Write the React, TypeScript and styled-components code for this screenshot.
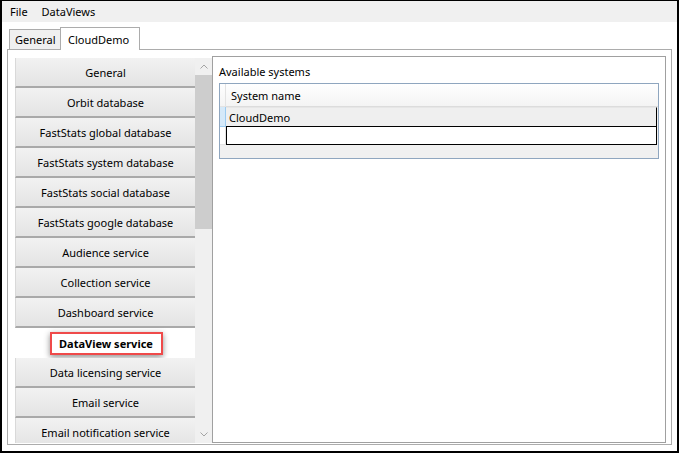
import React from 'react'
import styled, { createGlobalStyle } from 'styled-components'

const GlobalStyle = createGlobalStyle`
  html, body {
    margin: 0;
    padding: 0;
    background: #ffffff;
  }
  * {
    box-sizing: border-box;
  }
`

const Window = styled.div`
  width: 679px;
  height: 453px;
  border-top: 1px solid #000;
  border-left: 2px solid #000;
  border-right: 2px solid #000;
  border-bottom: 2px solid #000;
  background: #ffffff;
  display: flex;
  flex-direction: column;
  font-family: "Segoe UI", "Noto Sans", "Open Sans", sans-serif;
  font-size: 11px;
  color: #000;
  overflow: hidden;
`

const MenuBar = styled.div`
  height: 21px;
  background: #f0f0f0;
  display: flex;
  align-items: center;
  padding-left: 8px;
  gap: 14px;
  flex-shrink: 0;
`

const MenuItem = styled.span`
  line-height: 21px;
`

const TabStrip = styled.div`
  height: 27px;
  display: flex;
  align-items: flex-end;
  padding-left: 7px;
  flex-shrink: 0;
`

const Tab = styled.div<{ active?: boolean; w: number }>`
  width: ${p => p.w}px;
  height: ${p => (p.active ? 23 : 20)}px;
  padding-left: ${p => (p.active ? 7 : 5)}px;
  display: flex;
  align-items: center;
  border: 1px solid #acacac;
  border-bottom: none;
  background: ${p => (p.active ? '#ffffff' : '#f0f0f0')};
  margin-left: ${p => (p.active ? -1 : 0)}px;
  margin-bottom: ${p => (p.active ? -1 : 0)}px;
  position: relative;
  z-index: ${p => (p.active ? 1 : 0)};
`

const TabPanel = styled.div`
  height: 396px;
  margin: 0 5px 0 5px;
  border: 1px solid #acacac;
  background: #ffffff;
  display: flex;
  padding: 6px 5px 1px 7px;
`

const SideList = styled.div`
  width: 197px;
  margin-top: 2px;
  display: flex;
  flex-shrink: 0;
`

const ButtonColumn = styled.div`
  width: 180px;
  overflow: hidden;
  display: flex;
  flex-direction: column;
`

const NavButton = styled.div<{ selected?: boolean }>`
  height: 30px;
  flex-shrink: 0;
  display: flex;
  align-items: center;
  justify-content: center;
  padding-top: 1px;
  background: ${p => (p.selected ? '#ffffff' : 'linear-gradient(#f2f2f2, #e4e4e4)')};
  border-left: 1px solid ${p => (p.selected ? '#b4b4b4' : '#d9d9d9')};
  border-bottom: ${p => (p.selected ? 'none' : '2px solid #a9a9a9')};
  margin-left: ${p => (p.selected ? -1 : 0)}px;
  font-weight: ${p => (p.selected ? 700 : 400)};
  color: #000;
  white-space: nowrap;
`

const Highlight = styled.span`
  width: 113px;
  height: 23px;
  display: flex;
  align-items: center;
  justify-content: center;
  border: 2px solid #ef4a4a;
  box-shadow: 0 2px 6px rgba(0, 0, 0, 0.45);
  background: #fff;
  margin-left: 2px;
`

const ScrollBar = styled.div`
  width: 17px;
  background: #f0f0f0;
  display: flex;
  flex-direction: column;
`

const ScrollArrow = styled.div`
  height: 17px;
  display: flex;
  align-items: center;
  justify-content: center;
  flex-shrink: 0;
`

const ScrollTrack = styled.div`
  flex: 1;
  display: flex;
  flex-direction: column;
`

const ScrollThumb = styled.div`
  height: 154px;
  background: #cdcdcd;
`

const DetailPanel = styled.div`
  flex: 1;
  border: 1px solid #a0a0a0;
  padding: 7px 6px 0 6px;
  display: flex;
  flex-direction: column;
`

const Label = styled.div`
  line-height: 16px;
  margin-bottom: 3px;
`

const Grid = styled.div`
  height: 76px;
  border: 1px solid #8fa6bf;
  background: #f0f0f0;
  display: flex;
  flex-direction: column;
`

const GridRow = styled.div<{ h: number }>`
  height: ${p => p.h}px;
  display: flex;
  flex-shrink: 0;
`

const RowHeader = styled.div<{ kind: 'header' | 'selected' | 'plain' }>`
  width: 6px;
  flex-shrink: 0;
  background: ${p =>
    p.kind === 'header'
      ? 'linear-gradient(#ffffff, #f4f4f4)'
      : p.kind === 'selected'
      ? '#d5e9f9'
      : '#ffffff'};
  border-right: 1px solid ${p => (p.kind === 'selected' ? '#9ccbf0' : '#e3e3e3')};
  border-bottom: 1px solid ${p => (p.kind === 'selected' ? '#9ccbf0' : '#e3e3e3')};
`

const HeaderCell = styled.div`
  flex: 1;
  background: linear-gradient(#ffffff, #f4f4f4);
  border-bottom: 1px solid #dcdcdc;
  display: flex;
  align-items: center;
  padding-left: 5px;
`

const DataCell = styled.div<{ current?: boolean }>`
  width: 431px;
  flex-shrink: 0;
  display: flex;
  align-items: center;
  padding-left: 3px;
  background: ${p => (p.current ? '#ffffff' : '#efefef')};
  border-right: 1px solid #000;
  border-bottom: 1px solid #000;
  border-left: ${p => (p.current ? '1px solid #000' : 'none')};
  border-top: ${p => (p.current ? 'none' : '1px solid #e6e6e6')};
`

const Chevron = ({ up }: { up?: boolean }) => (
  <svg width="8" height="5" viewBox="0 0 8 5">
    <path
      d={up ? 'M0.5 4.5 L4 1 L7.5 4.5' : 'M0.5 0.5 L4 4 L7.5 0.5'}
      fill="none"
      stroke="#a3a3a3"
      strokeWidth="1"
    />
  </svg>
)

const items = [
  'General',
  'Orbit database',
  'FastStats global database',
  'FastStats system database',
  'FastStats social database',
  'FastStats google database',
  'Audience service',
  'Collection service',
  'Dashboard service',
  'DataView service',
  'Data licensing service',
  'Email service',
  'Email notification service',
]

export default function App() {
  return (
    <>
      <GlobalStyle />
      <Window>
        <MenuBar>
          <MenuItem>File</MenuItem>
          <MenuItem>DataViews</MenuItem>
        </MenuBar>
        <TabStrip>
          <Tab w={52}>General</Tab>
          <Tab active w={80}>CloudDemo</Tab>
        </TabStrip>
        <TabPanel>
          <SideList>
            <ButtonColumn>
              {items.map(name =>
                name === 'DataView service' ? (
                  <NavButton key={name} selected>
                    <Highlight>{name}</Highlight>
                  </NavButton>
                ) : (
                  <NavButton key={name}>{name}</NavButton>
                )
              )}
            </ButtonColumn>
            <ScrollBar>
              <ScrollArrow>
                <Chevron up />
              </ScrollArrow>
              <ScrollTrack>
                <ScrollThumb />
              </ScrollTrack>
              <ScrollArrow>
                <Chevron />
              </ScrollArrow>
            </ScrollBar>
          </SideList>
          <DetailPanel>
            <Label>Available systems</Label>
            <Grid>
              <GridRow h={23}>
                <RowHeader kind="header" />
                <HeaderCell>System name</HeaderCell>
              </GridRow>
              <GridRow h={20}>
                <RowHeader kind="selected" />
                <DataCell>CloudDemo</DataCell>
              </GridRow>
              <GridRow h={18}>
                <RowHeader kind="plain" />
                <DataCell current />
              </GridRow>
            </Grid>
          </DetailPanel>
        </TabPanel>
      </Window>
    </>
  )
}
